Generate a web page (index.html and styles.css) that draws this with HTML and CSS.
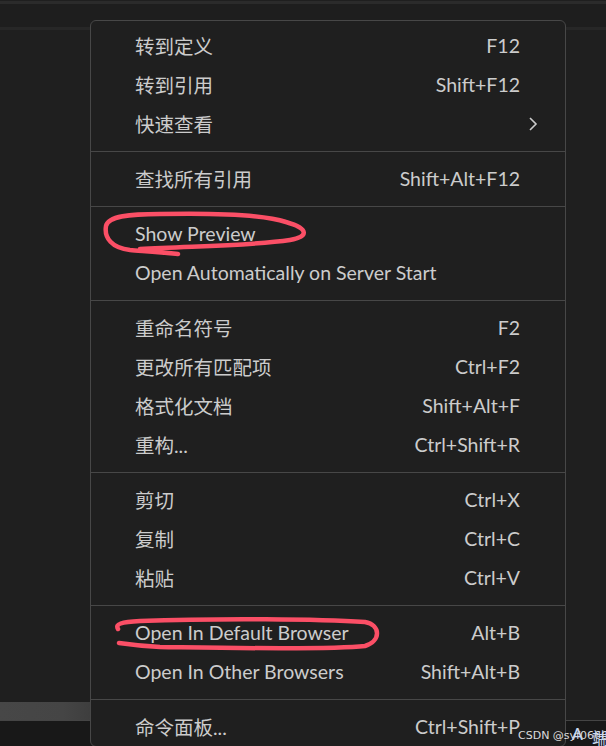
FILE: index.html
```html
<!DOCTYPE html>
<html lang="zh-CN">
<head>
<meta charset="utf-8">
<title>Context menu</title>
<link rel="stylesheet" href="styles.css">
</head>
<body>
<div class="workbench">
  <div class="edge-top"></div>
  <div class="tabs"></div>
  <div class="editor"></div>
  <div class="panel-bar">
    <div class="scroll-thumb"></div>
    <div class="panel-rest"></div>
  </div>
  <div class="panel"></div>
</div>

<div class="menu">
  <div class="item"><span class="label">转到定义</span><span class="key">F12</span><span class="sub"></span></div>
  <div class="item"><span class="label">转到引用</span><span class="key">Shift+F12</span><span class="sub"></span></div>
  <div class="item"><span class="label">快速查看</span><span class="key"></span><span class="sub"><svg class="chev" width="10" height="16" viewBox="0 0 10 16"><path d="M2 2 L8 8 L2 14" fill="none" stroke="#cccccc" stroke-width="1.6"/></svg></span></div>
  <div class="sep"></div>
  <div class="item"><span class="label">查找所有引用</span><span class="key">Shift+Alt+F12</span><span class="sub"></span></div>
  <div class="sep"></div>
  <div class="item"><span class="label">Show Preview</span><span class="key"></span><span class="sub"></span></div>
  <div class="item"><span class="label">Open Automatically on Server Start</span><span class="key"></span><span class="sub"></span></div>
  <div class="sep"></div>
  <div class="item"><span class="label">重命名符号</span><span class="key">F2</span><span class="sub"></span></div>
  <div class="item"><span class="label">更改所有匹配项</span><span class="key">Ctrl+F2</span><span class="sub"></span></div>
  <div class="item"><span class="label">格式化文档</span><span class="key">Shift+Alt+F</span><span class="sub"></span></div>
  <div class="item"><span class="label">重构...</span><span class="key">Ctrl+Shift+R</span><span class="sub"></span></div>
  <div class="sep"></div>
  <div class="item"><span class="label">剪切</span><span class="key">Ctrl+X</span><span class="sub"></span></div>
  <div class="item"><span class="label">复制</span><span class="key">Ctrl+C</span><span class="sub"></span></div>
  <div class="item"><span class="label">粘贴</span><span class="key">Ctrl+V</span><span class="sub"></span></div>
  <div class="sep"></div>
  <div class="item"><span class="label">Open In Default Browser</span><span class="key">Alt+B</span><span class="sub"></span></div>
  <div class="item"><span class="label">Open In Other Browsers</span><span class="key">Shift+Alt+B</span><span class="sub"></span></div>
  <div class="sep"></div>
  <div class="item"><span class="label">命令面板...</span><span class="key">Ctrl+Shift+P</span><span class="sub"></span></div>
</div>

<svg class="marks" width="606" height="746" viewBox="0 0 606 746">
  <path d="M178 254 C160 252 142 251 130 250 C112 248 104 238 106 226 C108 216 130 214 160 214 C210 213 262 214 286 222 C310 229 308 237 290 240 C250 246 190 246 140 249" fill="none" stroke="#fb4f66" stroke-width="4.5" stroke-linecap="round" stroke-linejoin="round"/>
  <path d="M118 629 C115 624 121 622 140 621 C220 618 320 619 365 622 C381 625 381 641 365 646 C330 650 230 648 160 647 C140 646 126 644 119 643" fill="none" stroke="#fb4f66" stroke-width="4.5" stroke-linecap="round" stroke-linejoin="round"/>
</svg>

<div class="watermark">
  <span class="wm-text">CSDN @syf0666</span>
  <span class="ime ime-a">A</span>
  <span class="ime ime-cjk">端</span>
</div>
</body>
</html>
```

FILE: styles.css
```css
* { box-sizing: border-box; }

html, body {
  margin: 0;
  padding: 0;
  width: 606px;
  height: 746px;
  overflow: hidden;
  background: #1f1f1f;
}

.workbench {
  display: flex;
  flex-direction: column;
  height: 746px;
}

.edge-top {
  height: 3px;
  margin-top: 1px;
  background: #2b2b2b;
  flex: none;
}

.tabs {
  height: 23px;
  background: #1e1e1e;
  border-bottom: 3px solid #272727;
  flex: none;
  box-sizing: content-box;
}

.editor {
  flex: 1;
  background: #1f1f1f;
}

.panel-bar {
  height: 18px;
  display: flex;
  flex: none;
}

.scroll-thumb {
  width: 90px;
  background: linear-gradient(to right, #474747 0%, #454545 70%, #3e3e3e 100%);
}

.panel-rest {
  flex: 1;
  background: #1f1f1f;
}

.panel {
  height: 26px;
  flex: none;
  background: #181818;
  border-top: 1px solid #444444;
}

.menu {
  position: absolute;
  left: 90px;
  top: 20px;
  width: 476px;
  padding-top: 5px;
  background: #1f1f1f;
  border: 1px solid #474747;
  border-radius: 6px;
  font-family: "Lato", "Noto Sans CJK SC", sans-serif;
  font-size: 19.5px;
  color: #cccccc;
}

.item {
  display: flex;
  align-items: center;
  height: 39px;
  padding-left: 44px;
}

.label {
  flex: 1;
  white-space: nowrap;
}

.key {
  white-space: nowrap;
}

.sub {
  width: 45px;
  display: flex;
  align-items: center;
}

.chev {
  margin-left: 8px;
}

.sep {
  height: 16px;
  display: flex;
  align-items: center;
}

.sep::before {
  content: "";
  display: block;
  width: 100%;
  height: 1px;
  background: #474747;
}

.marks {
  position: absolute;
  left: 0;
  top: 0;
  pointer-events: none;
}

.watermark {
  position: absolute;
  left: 518px;
  top: 725px;
  width: 88px;
  height: 21px;
  font-family: "DejaVu Sans", "Noto Sans CJK SC", sans-serif;
  white-space: nowrap;
}

.wm-text {
  position: absolute;
  left: 0;
  top: 4px;
  font-size: 11px;
  color: rgba(255, 255, 255, 0.85);
}

.ime {
  position: absolute;
  top: 0;
  font-size: 16px;
  color: #c8d8f0;
}

.ime-a {
  left: 54px;
}

.ime-cjk {
  left: 74px;
}
```
